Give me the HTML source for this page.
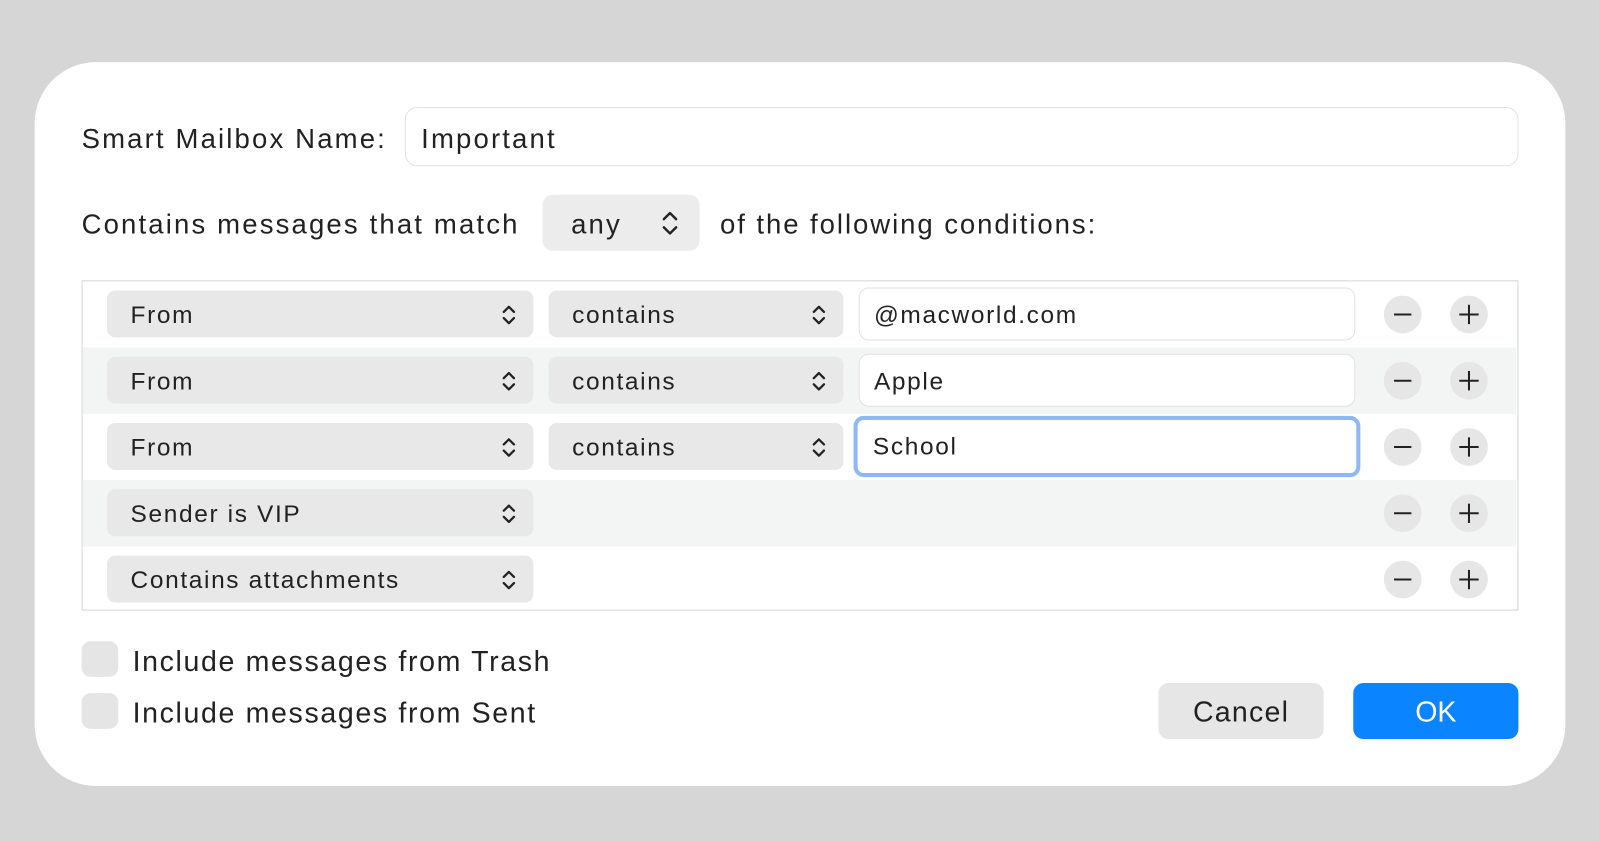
<!DOCTYPE html><html><head><style>
body{margin:0;width:1599px;height:841px;overflow:hidden;background:#d6d6d6;font-family:"Liberation Sans",sans-serif;color:#222}
#s{position:absolute;left:0;top:0;width:1568px;height:825px;transform:scale(1.01977,1.01939);transform-origin:0 0}
.a{position:absolute}
.dlg{left:34px;top:61px;width:1501px;height:710px;background:#fff;border-radius:60px}
.t{font-size:27px;white-space:nowrap;letter-spacing:2.1px}
.pop{position:absolute;height:46px;background:#e8e8e8;border-radius:8px;font-size:24px;line-height:50px;padding-left:23px;box-sizing:border-box;letter-spacing:1.6px}
.pop svg{position:absolute;right:16px;top:13px}
.fld{position:absolute;left:842px;width:487px;height:52px;border:1px solid #e2e2e2;border-radius:10px;background:#fff;font-size:24px;line-height:54px;padding-left:14px;box-sizing:border-box;letter-spacing:1.6px}
.c{position:absolute;width:37px;height:37px;border-radius:50%;background:#e6e6e6}
.c svg{position:absolute;left:8px;top:8px}
.row{position:absolute;left:81px;width:1406px;height:65px}
</style></head><body><div id="s">
<div class="a dlg"></div>
<div class="a t" style="left:80px;top:121px">Smart Mailbox Name:</div>
<div class="a" style="left:397px;top:105px;width:1092px;height:58px;border:1px solid #e3e3e3;border-radius:12px;box-sizing:border-box"></div>
<div class="a t" style="left:413px;top:121px">Important</div>
<div class="a t" style="left:80px;top:205px">Contains messages that match</div>
<div class="a" style="left:532px;top:191px;width:154px;height:55px;background:#ececec;border-radius:10px"></div>
<div class="a t" style="left:560px;top:205px">any</div>
<svg class="a" style="left:648px;top:206px" width="18" height="26"><path d="M3 9l6-6 6 6M3 17l6 6 6-6" fill="none" stroke="#222" stroke-width="2.4" stroke-linecap="round" stroke-linejoin="round"/></svg>
<div class="a t" style="left:706px;top:205px;letter-spacing:1.9px">of the following conditions:</div>
<div class="a" style="left:80px;top:275px;width:1409px;height:324px;border:1px solid #d5d5d5;box-sizing:border-box"></div>
<div class="row" style="top:341px;background:#f3f4f4"></div>
<div class="row" style="top:471px;background:#f3f4f4"></div>
<div id="rows"></div>
<div class="a" style="left:80px;top:629px;width:36px;height:35px;background:#e5e5e5;border-radius:9px"></div>
<div class="a" style="left:80px;top:680px;width:36px;height:35px;background:#e5e5e5;border-radius:9px"></div>
<div class="a t" style="left:130px;top:633px;font-size:28px;letter-spacing:1.6px">Include messages from Trash</div>
<div class="a t" style="left:130px;top:684px;font-size:28px;letter-spacing:1.6px">Include messages from Sent</div>
<div class="a" style="left:1136px;top:670px;width:162px;height:55px;background:#e6e6e6;border-radius:10px;font-size:28px;line-height:58px;text-align:center;letter-spacing:1.2px">Cancel</div>
<div class="a" style="left:1327px;top:670px;width:162px;height:55px;background:#0a84ff;border-radius:10px;font-size:28px;line-height:58px;text-align:center;color:#fff">OK</div>
</div>
<script>
var arr=[["From","@macworld.com"],["From","Apple"],["From","School"],["Sender is VIP"],["Contains attachments"]];
var ch='<svg width="16" height="22"><path d="M3 8l5-5 5 5M3 14l5 5 5-5" fill="none" stroke="#222" stroke-width="2.2" stroke-linecap="round" stroke-linejoin="round"/></svg>';
var h='';
arr.forEach(function(r,i){var y=276+i*65,cy=y+32;
h+='<div class="pop" style="left:105px;top:'+(cy-23)+'px;width:418px">'+r[0]+ch+'</div>';
if(r[1]){h+='<div class="pop" style="left:538px;top:'+(cy-23)+'px;width:289px">contains'+ch+'</div>';
var foc=i==2?'border:4px solid #8db8f4;left:837px;width:497px;height:60px;line-height:54px;padding-left:15px;':'';
h+='<div class="fld" style="top:'+(cy-26-(i==2?4:0))+'px;'+foc+'">'+r[1]+'</div>';}
h+='<div class="c" style="left:1357px;top:'+(cy-18)+'px"><svg width="21" height="21"><path d="M2 10.5h17" stroke="#222" stroke-width="2"/></svg></div>';
h+='<div class="c" style="left:1422px;top:'+(cy-18)+'px"><svg width="21" height="21"><path d="M1 10.5h19M10.5 1v19" stroke="#222" stroke-width="2"/></svg></div>';});
document.getElementById('rows').outerHTML=h;
</script></body></html>
